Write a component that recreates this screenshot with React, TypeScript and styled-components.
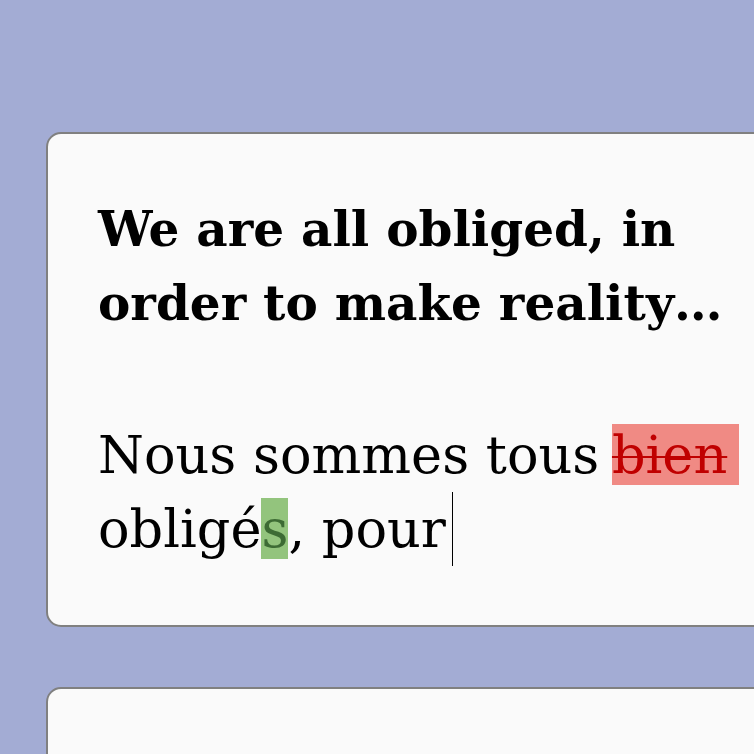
import React from "react";
import styled, {createGlobalStyle} from "styled-components";

const Global = createGlobalStyle`
  html, body {
    margin: 0;
    background: #a3acd4;
    overflow: hidden;
  }
`

const Page = styled.div`
  width: 754px;
  height: 754px;
  overflow: hidden;
  padding: 132px 0 0 46px;
  box-sizing: border-box;
  display: flex;
  flex-direction: column;
  gap: 60px;
`

const Card = styled.div<{ $height?: number }>`
  width: 760px;
  flex-shrink: 0;
  box-sizing: border-box;
  ${p => p.$height ? `height: ${p.$height}px;` : ''}
  background: #fafafa;
  border: 2px solid #808080;
  border-radius: 15px;
  padding: 58px 50px 59px 50px;
  font-family: "DejaVu Serif", "Liberation Serif", serif;
  color: #000;
`

const Title = styled.h1`
  margin: 0 0 78px;
  font-size: 48.5px;
  line-height: 74px;
  font-weight: 700;
  width: 640px;
`

const Body = styled.p`
  margin: 0;
  font-size: 52.5px;
  line-height: 74px;
  width: 660px;
`

const Mark = styled.span<{ $kind: 'del' | 'ins' }>`
  background: ${p => p.$kind === 'del' ? '#f08a84' : '#93c47d'};
  color: ${p => p.$kind === 'del' ? '#c00000' : '#3d6b34'};
  text-decoration: ${p => p.$kind === 'del' ? 'line-through' : 'none'};
  text-decoration-thickness: 2px;
  padding: ${p => p.$kind === 'del' ? '0 12px 0 0' : '0'};
  margin-left: ${p => p.$kind === 'del' ? '-4px' : '0'};
`

const Caret = styled.span`
  display: inline-block;
  width: 1px;
  height: 74px;
  background: #000;
  vertical-align: -19px;
  margin-left: 6px;
`

export default function App() {
    return (
        <>
            <Global/>
            <Page>
                <Card>
                    <Title>We are all obliged, in order to make reality…</Title>
                    <Body>
                        Nous sommes tous <Mark $kind="del">bien</Mark> obligé<Mark $kind="ins">s</Mark>, pour<Caret/>
                    </Body>
                </Card>
                <Card $height={200}/>
            </Page>
        </>
    )
}
